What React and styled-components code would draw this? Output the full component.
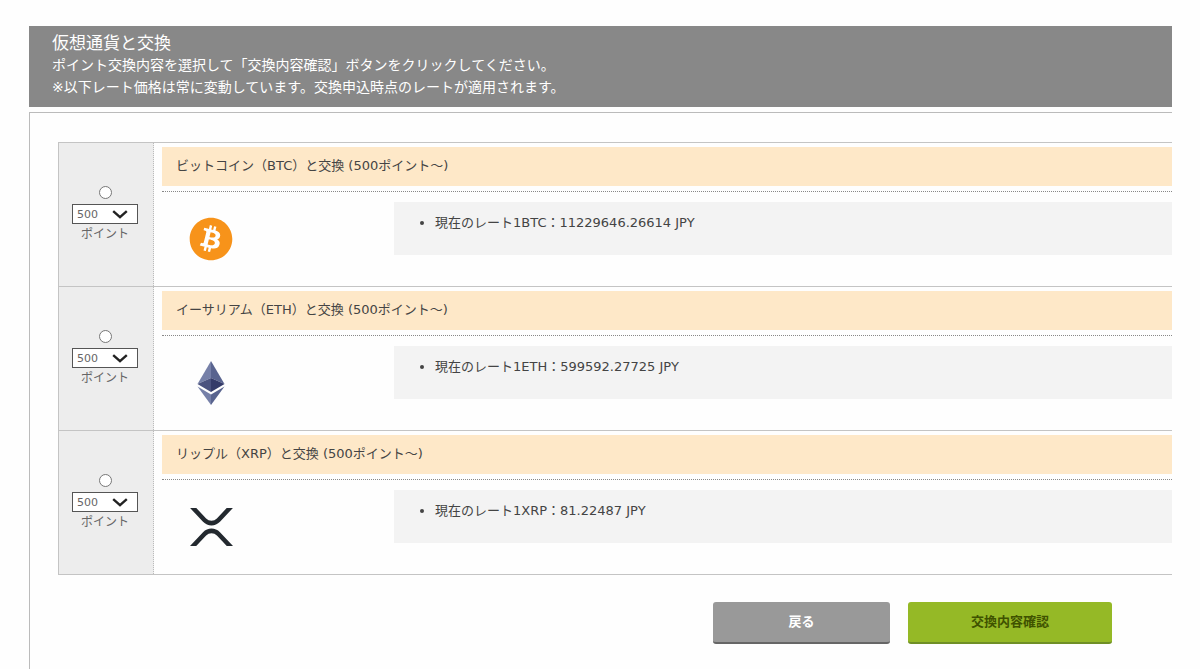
import React, { useState } from "react";
import styled, { createGlobalStyle } from "styled-components";
import { FaBitcoin } from "react-icons/fa";

const GlobalStyle = createGlobalStyle`
  * {
    box-sizing: border-box;
  }
  body {
    margin: 0;
    background: #fefefe;
    color: #444;
    font-family: "DejaVu Sans", "Noto Sans CJK JP", sans-serif;
    font-size: 13px;
    line-height: 20px;
  }
  h1, h2, p, ul {
    margin: 0;
    padding: 0;
    font-weight: normal;
  }
`;

const Page = styled.form`
  display: flex;
  flex-direction: column;
  gap: 5px;
  min-height: 100vh;
  padding: 26px 28px 0 29px;
`;

const Header = styled.header`
  padding: 7px 23px 9px;
  background: #888;
  color: #fff;
  font-size: 14px;
  line-height: 22px;
  h1 {
    font-size: 17px;
    line-height: 21px;
  }
`;

const Panel = styled.main`
  flex: 1;
  padding: 29px 0 25px 28px;
  border-top: 1px solid #bbb;
  border-left: 1px solid #bbb;
`;

const CoinList = styled.div`
  border-top: 1px solid #c4c4c4;
  border-left: 1px solid #c4c4c4;
`;

const CoinRow = styled.section`
  display: flex;
  min-height: 144px;
  border-bottom: 1px solid #c4c4c4;
`;

const Choice = styled.div`
  display: flex;
  flex-direction: column;
  align-items: center;
  justify-content: center;
  width: 95px;
  padding: 1px 2px 0 0;
  background: #ededed;
  border-right: 1px dotted #bbb;
  color: #666;
  font-size: 12px;
`;

const Radio = styled.input`
  appearance: none;
  width: 13px;
  height: 13px;
  margin: 0 0 5px;
  border: 1px solid #777;
  border-radius: 50%;
  background: #fff;
  &:checked {
    background: #555;
    box-shadow: inset 0 0 0 3px #fff;
  }
`;

const SelectBox = styled.div`
  position: relative;
  svg {
    position: absolute;
    top: 6px;
    right: 10px;
    width: 16px;
    height: 9px;
    pointer-events: none;
  }
`;

const Select = styled.select`
  display: block;
  appearance: none;
  width: 66px;
  height: 20px;
  padding: 0 4px;
  border: 1px solid #555;
  border-radius: 0;
  background: #fff;
  color: #666;
  font-family: inherit;
  font-size: 11px;
`;

const Detail = styled.div`
  flex: 1;
  padding: 4px 0 0 8px;
`;

const CoinTitle = styled.h2`
  padding: 9px 14px 10px;
  background: #fee8c8;
  font-size: 13px;
  line-height: 20px;
`;

const CoinBody = styled.div`
  display: flex;
  align-items: flex-start;
  margin-top: 5px;
  padding-top: 10px;
  border-top: 1px dotted #888;
`;

const Logo = styled.div`
  display: flex;
  align-items: center;
  justify-content: center;
  width: 44px;
  height: 44px;
  margin: 15px 161px 0 27px;
  svg {
    display: block;
  }
`;

const Rates = styled.ul`
  flex: 1;
  min-height: 53px;
  padding: 11px 20px 20px 41px;
  background: #f3f3f3;
`;

const Buttons = styled.div`
  display: flex;
  justify-content: flex-end;
  gap: 18px;
  padding: 27px 60px 0 0;
`;

const Button = styled.button`
  width: ${({ $primary }) => ($primary ? "204px" : "177px")};
  height: 42px;
  padding: 0 0 4px;
  border: 0;
  border-bottom: 2px solid ${({ $primary }) => ($primary ? "#6f8f26" : "#666")};
  border-radius: 3px;
  background: ${({ $primary }) => ($primary ? "#95b926" : "#999")};
  color: ${({ $primary }) => ($primary ? "#3f5200" : "#fff")};
  font-family: inherit;
  font-size: 13px;
  font-weight: bold;
  cursor: pointer;
`;

const EthLogo = () => (
  <svg width="28" height="44" viewBox="0 0 28 44" aria-hidden="true">
    <path d="M14 0 L0.5 23 L14 17 Z" fill="#7680a8" />
    <path d="M14 0 L27.5 23 L14 17 Z" fill="#59648f" />
    <path d="M14 17 L0.5 23 L14 31 Z" fill="#4a527f" />
    <path d="M14 17 L27.5 23 L14 31 Z" fill="#343b69" />
    <path d="M0.5 25.5 L14 33.5 L14 44 Z" fill="#7680a8" />
    <path d="M27.5 25.5 L14 33.5 L14 44 Z" fill="#59648f" />
  </svg>
);

const XrpLogo = () => (
  <svg width="43" height="38" viewBox="0 0 512 424" preserveAspectRatio="none" fill="#23292f" aria-hidden="true">
    <path d="M437 0h74L357 152.5c-55.8 55.2-146.2 55.2-202 0L.9 0H75l117 115.8a91.1 91.1 0 0 0 127.9 0Z" />
    <path d="M74 424H0l155-153.4c55.8-55.2 146.2-55.2 202 0L512 424h-74L320 307.2a91.1 91.1 0 0 0-127.9 0Z" />
  </svg>
);

const coins = [
  { code: "BTC", name: "ビットコイン", rate: "11229646.26614", logo: <FaBitcoin size={44} color="#f7931a" /> },
  { code: "ETH", name: "イーサリアム", rate: "599592.27725", logo: <EthLogo /> },
  { code: "XRP", name: "リップル", rate: "81.22487", logo: <XrpLogo /> },
];

const Coin = ({ code, name, rate, logo, checked, onSelect }) => (
  <CoinRow>
    <Choice>
      <Radio
        type="radio"
        name="coin"
        value={code}
        checked={checked}
        onChange={onSelect}
        aria-labelledby={`title-${code}`}
      />
      <SelectBox>
        <Select id={`point-${code}`} defaultValue="500">
          <option>500</option>
          <option>1000</option>
          <option>5000</option>
        </Select>
        <svg viewBox="0 0 16 9" fill="none" stroke="#222" strokeWidth="2.4" aria-hidden="true">
          <path d="M1.2 1.2 L8 7.2 L14.8 1.2" />
        </svg>
      </SelectBox>
      <label htmlFor={`point-${code}`}>ポイント</label>
    </Choice>
    <Detail>
      <CoinTitle id={`title-${code}`}>
        {name}（{code}）と交換 (500ポイント～)
      </CoinTitle>
      <CoinBody>
        <Logo>{logo}</Logo>
        <Rates>
          <li>
            現在のレート1{code}：{rate} JPY
          </li>
        </Rates>
      </CoinBody>
    </Detail>
  </CoinRow>
);

const App = () => {
  const [selected, setSelected] = useState(null);
  return (
    <>
      <GlobalStyle />
      <Page onSubmit={(e) => e.preventDefault()}>
        <Header>
          <h1>仮想通貨と交換</h1>
          <p>ポイント交換内容を選択して「交換内容確認」ボタンをクリックしてください。</p>
          <p>※以下レート価格は常に変動しています。交換申込時点のレートが適用されます。</p>
        </Header>
        <Panel>
          <CoinList>
            {coins.map((coin) => (
              <Coin
                key={coin.code}
                {...coin}
                checked={selected === coin.code}
                onSelect={() => setSelected(coin.code)}
              />
            ))}
          </CoinList>
          <Buttons>
            <Button type="button">戻る</Button>
            <Button type="submit" $primary>
              交換内容確認
            </Button>
          </Buttons>
        </Panel>
      </Page>
    </>
  );
};

export default App;
